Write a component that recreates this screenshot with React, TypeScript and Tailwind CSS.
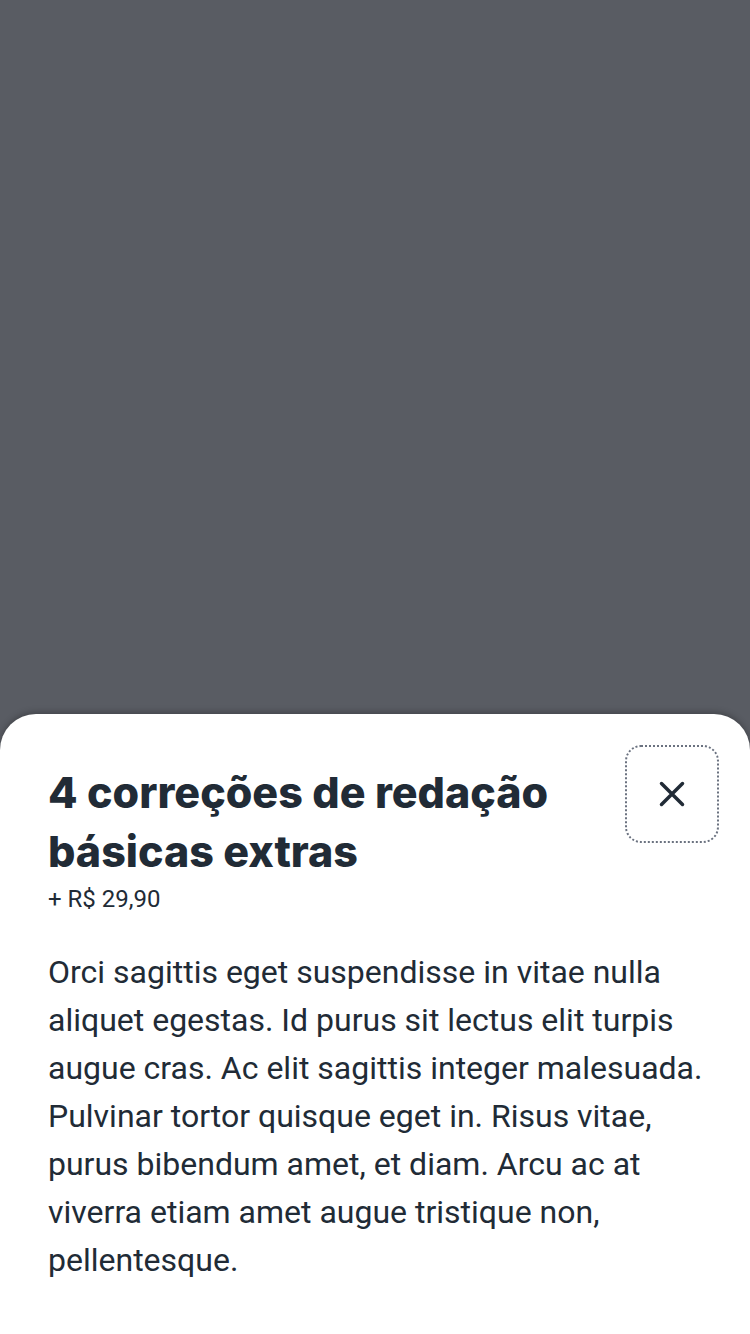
import React from "react";

function CloseIcon() {
  return (
    <svg width="28" height="28" viewBox="0 0 24 24" fill="none">
      <path
        d="M3 3L21 21M21 3L3 21"
        stroke="#212b36"
        strokeWidth="3"
        strokeLinecap="round"
      />
    </svg>
  );
}

export default function App() {
  return (
    <div className="w-[750px] h-[1334px] bg-[#595c63] flex flex-col justify-end overflow-hidden">
      <div className="h-[620px] bg-white rounded-t-[36px] shadow-[0_-2px_6px_rgba(0,0,0,0.25)] pl-12 pr-[31px] pt-[31px] text-[#212b36]">
        <div className="flex items-start justify-between">
          <h1
            className="pt-[18px] text-[43px] leading-[59px] font-extrabold w-[540px]"
            style={{ fontFamily: "Inter, 'Noto Sans', sans-serif" }}
          >
            4 correções de redação básicas extras
          </h1>
          <button className="w-[94px] h-[98px] rounded-[16px] border-2 border-dotted border-[#6b7280] flex items-center justify-center">
            <CloseIcon />
          </button>
        </div>
        <p
          className="text-[24px] leading-[30px] mt-[3px]"
          style={{ fontFamily: "Roboto, sans-serif" }}
        >
          + R$ 29,90
        </p>
        <p
          className="mt-[34px] text-[32px] leading-[48px]"
          style={{ fontFamily: "Roboto, sans-serif" }}
        >
          Orci sagittis eget suspendisse in vitae nulla aliquet egestas. Id
          purus sit lectus elit turpis augue cras. Ac elit sagittis integer
          malesuada. Pulvinar tortor quisque eget in. Risus vitae, purus
          bibendum amet, et diam. Arcu ac at viverra etiam amet augue tristique
          non, pellentesque.
        </p>
      </div>
    </div>
  );
}
